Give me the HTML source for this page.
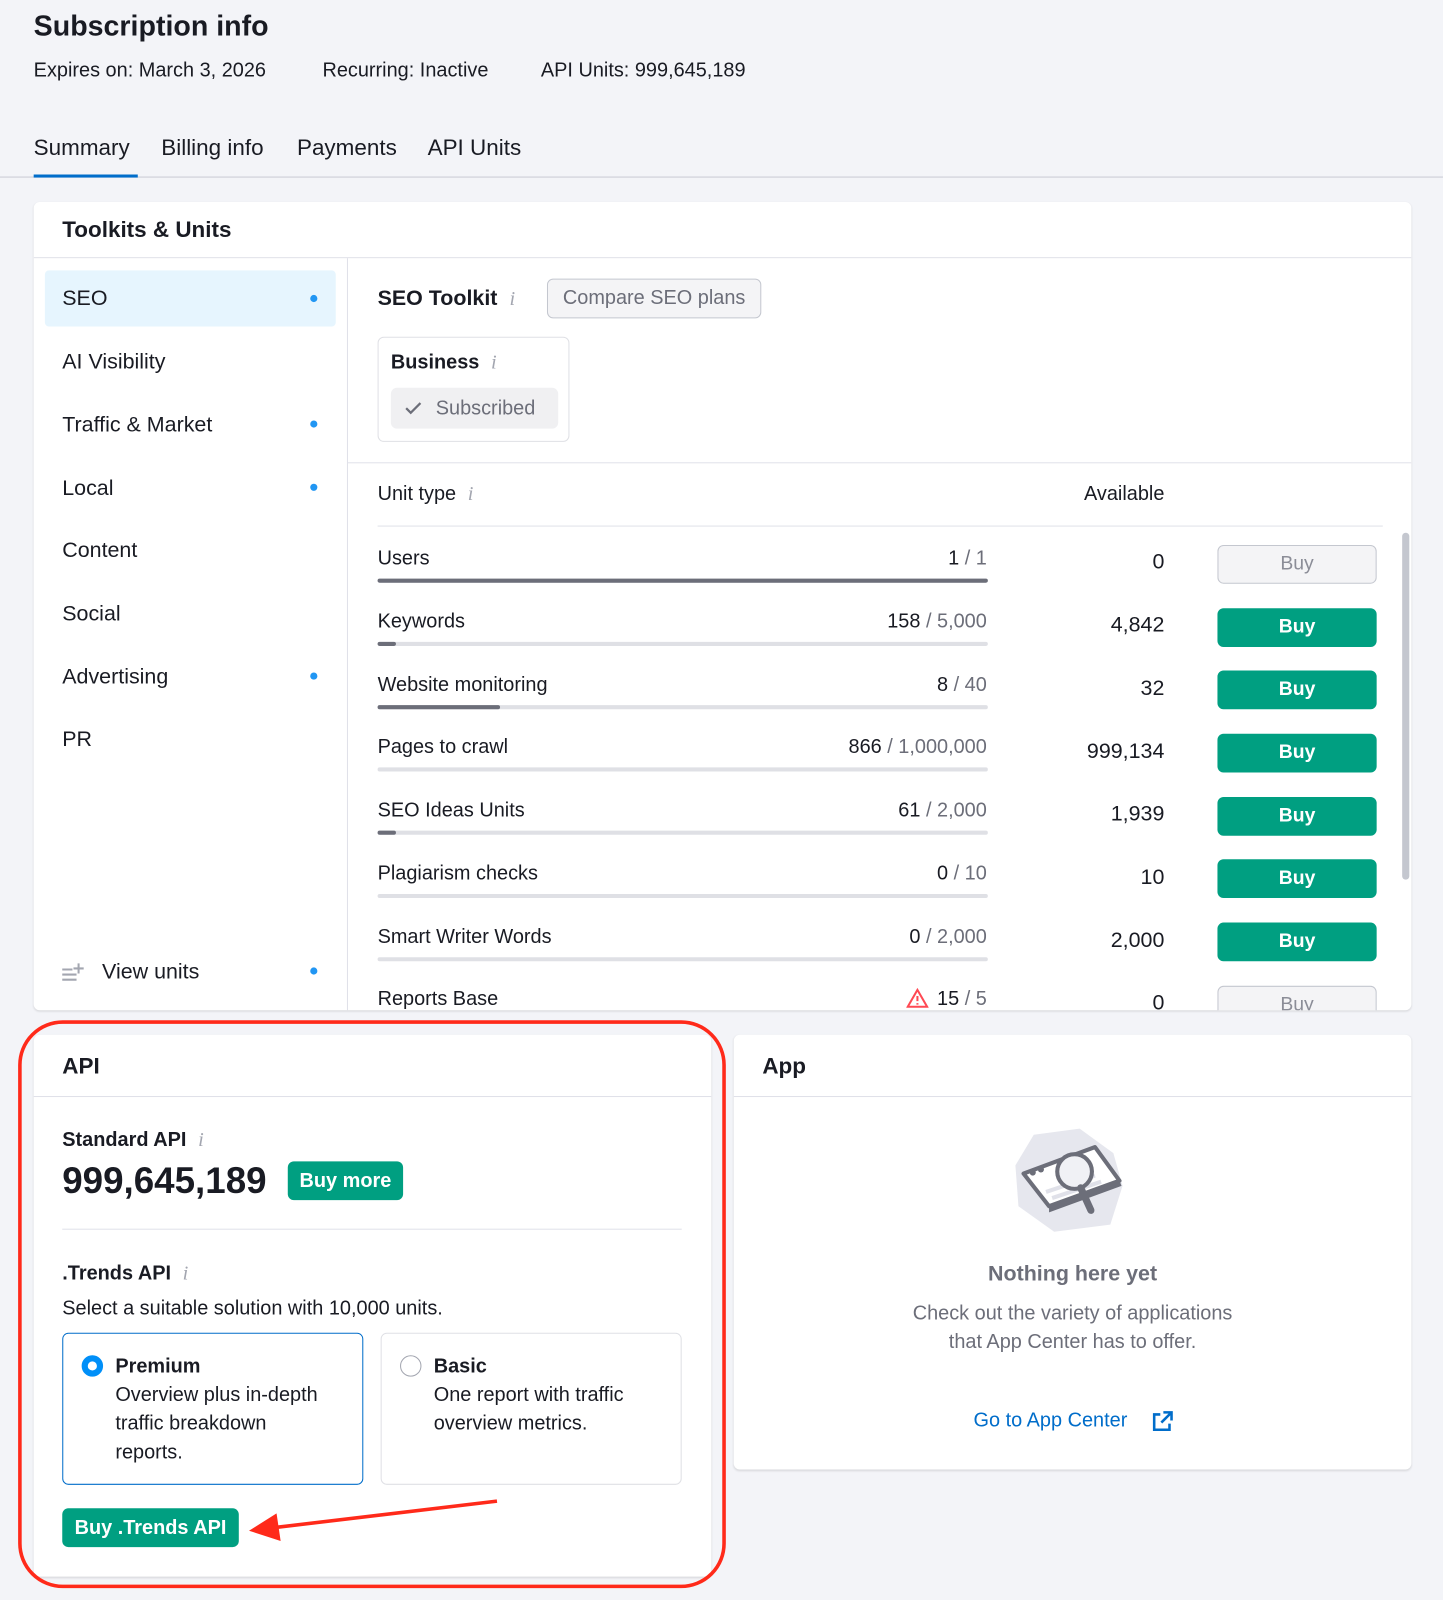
<!DOCTYPE html>
<html><head><meta charset="utf-8"><style>
*{box-sizing:border-box;margin:0;padding:0}
html,body{width:1443px;height:1600px;overflow:hidden;background:#f3f4f8}
body{font-family:"Liberation Sans",sans-serif;color:#191b23}
#w{position:absolute;left:0;top:0;width:1414px;height:1568px;transform:scale(1.0205);transform-origin:0 0}
.a{position:absolute;white-space:nowrap}
.card{position:absolute;background:#fff;border-radius:6px;box-shadow:0 1px 2px rgba(0,0,0,.12)}
.nav{position:absolute;left:61px;font-size:21px;color:#191b23}
.dot{position:absolute;left:304px;width:7px;height:7px;border-radius:50%;background:#2196f3}
.lbl{position:absolute;left:370px;font-size:19.5px}
.frac{position:absolute;right:447px;font-size:19.5px}
.frac span{color:#6c6e79}
.bar{position:absolute;left:370px;width:598px;height:4px;border-radius:2px;background:#dfe0e5}
.bar i{display:block;height:4px;border-radius:2px;background:#6c6e79}
.av{position:absolute;right:273px;font-size:21px}
.buy{position:absolute;left:1193px;width:156px;height:38px;border-radius:6px;background:#009f81;color:#fff;font-size:19px;font-weight:bold;text-align:center;line-height:38px}
.buy.d{background:#f4f4f6;border:1px solid #c4c7cf;color:#8b8d97;font-weight:normal;line-height:36px}
.ii{color:#a3a6b0;font-family:"Liberation Serif",serif;font-style:italic;font-size:20px}
</style></head><body><div id="w">
<div class="a" style="left:33px;top:10px;font-size:28px;font-weight:bold">Subscription info</div>
<div class="a" style="left:33px;top:58px;font-size:19.5px">Expires on: March 3, 2026</div>
<div class="a" style="left:316px;top:58px;font-size:19.5px">Recurring: Inactive</div>
<div class="a" style="left:530px;top:58px;font-size:19.5px">API Units: 999,645,189</div>
<div class="a" style="left:33px;top:132px;font-size:22px">Summary</div>
<div class="a" style="left:158px;top:132px;font-size:22px">Billing info</div>
<div class="a" style="left:291px;top:132px;font-size:22px">Payments</div>
<div class="a" style="left:419px;top:132px;font-size:22px">API Units</div>
<div class="a" style="left:0;top:173px;width:1414px;height:1px;background:#c9cbd3"></div>
<div class="a" style="left:33px;top:171px;width:102px;height:3px;background:#006dca"></div>

<div class="card" style="left:33px;top:198px;width:1350px;height:792px;overflow:hidden">
 <div class="a" style="left:28px;top:14px;font-size:22px;font-weight:bold">Toolkits &amp; Units</div>
 <div class="a" style="left:0;top:54px;width:1350px;height:1px;background:#e0e1e9"></div>
 <div class="a" style="left:307px;top:55px;width:1px;height:740px;background:#e0e1e9"></div>
 <div class="a" style="left:308px;top:255px;width:1042px;height:1px;background:#e0e1e9"></div>
</div>
<div class="a" style="left:44px;top:265px;width:285px;height:55px;background:#e6f5fe;border-radius:4px"></div>
<div class="nav" style="top:281px">SEO</div><div class="dot" style="top:289px"></div>
<div class="nav" style="top:343px">AI Visibility</div>
<div class="nav" style="top:405px">Traffic &amp; Market</div><div class="dot" style="top:412px"></div>
<div class="nav" style="top:467px">Local</div><div class="dot" style="top:474px"></div>
<div class="nav" style="top:528px">Content</div>
<div class="nav" style="top:590px">Social</div>
<div class="nav" style="top:652px">Advertising</div><div class="dot" style="top:659px"></div>
<div class="nav" style="top:713px">PR</div>
<svg class="a" style="left:60px;top:942px" width="24" height="20" viewBox="0 0 24 20" fill="none" stroke="#a3a6b0" stroke-width="2"><path d="M1 8h10M1 13h14M1 18h14M17 2v10M12 7h10"/></svg>
<div class="nav" style="left:100px;top:941px">View units</div><div class="dot" style="top:948px"></div>

<div class="a" style="left:370px;top:281px;font-size:21px;font-weight:bold">SEO Toolkit <span class="ii" style="font-weight:normal;margin-left:6px">i</span></div>
<div class="a" style="left:536px;top:273px;width:210px;height:39px;border:1px solid #c4c7cf;border-radius:6px;background:#f4f4f6;color:#6c6e79;font-size:19.5px;text-align:center;line-height:37px">Compare SEO plans</div>
<div class="a" style="left:370px;top:330px;width:188px;height:103px;border:1px solid #dfe0e5;border-radius:6px"></div>
<div class="a" style="left:383px;top:344px;font-size:19.5px;font-weight:bold">Business <span class="ii" style="font-weight:normal;margin-left:6px">i</span></div>
<div class="a" style="left:383px;top:380px;width:164px;height:40px;border-radius:6px;background:#f0f0f2;color:#6c6e79;font-size:19.5px;line-height:40px;padding-left:44px">Subscribed</div>
<svg class="a" style="left:397px;top:393px" width="16" height="14" viewBox="0 0 16 14"><path d="M1 7l4.5 4.5L15 2" fill="none" stroke="#6c6e79" stroke-width="2.2"/></svg>

<div class="a" style="left:370px;top:473px;font-size:19.5px">Unit type <span class="ii" style="margin-left:6px">i</span></div>
<div class="a" style="right:273px;top:473px;font-size:19.5px">Available</div>
<div class="a" style="left:370px;top:515px;width:985px;height:1px;background:#e0e1e9"></div>
<div class="a" style="left:1374px;top:522px;width:7px;height:340px;border-radius:4px;background:#c4c7cf"></div>

<div class="lbl" style="top:536px">Users</div><div class="frac" style="top:536px">1 <span>/ 1</span></div><div class="bar" style="top:567px"><i style="width:100%"></i></div><div class="av" style="top:539px">0</div><div class="buy d" style="top:534px">Buy</div>
<div class="lbl" style="top:598px">Keywords</div><div class="frac" style="top:598px">158 <span>/ 5,000</span></div><div class="bar" style="top:629px"><i style="width:3%"></i></div><div class="av" style="top:601px">4,842</div><div class="buy" style="top:596px">Buy</div>
<div class="lbl" style="top:660px">Website monitoring</div><div class="frac" style="top:660px">8 <span>/ 40</span></div><div class="bar" style="top:691px"><i style="width:20%"></i></div><div class="av" style="top:663px">32</div><div class="buy" style="top:657px">Buy</div>
<div class="lbl" style="top:721px">Pages to crawl</div><div class="frac" style="top:721px">866 <span>/ 1,000,000</span></div><div class="bar" style="top:752px"><i style="width:0"></i></div><div class="av" style="top:725px">999,134</div><div class="buy" style="top:719px">Buy</div>
<div class="lbl" style="top:783px">SEO Ideas Units</div><div class="frac" style="top:783px">61 <span>/ 2,000</span></div><div class="bar" style="top:814px"><i style="width:3%"></i></div><div class="av" style="top:786px">1,939</div><div class="buy" style="top:781px">Buy</div>
<div class="lbl" style="top:845px">Plagiarism checks</div><div class="frac" style="top:845px">0 <span>/ 10</span></div><div class="bar" style="top:876px"><i style="width:0"></i></div><div class="av" style="top:848px">10</div><div class="buy" style="top:842px">Buy</div>
<div class="lbl" style="top:907px">Smart Writer Words</div><div class="frac" style="top:907px">0 <span>/ 2,000</span></div><div class="bar" style="top:938px"><i style="width:0"></i></div><div class="av" style="top:910px">2,000</div><div class="buy" style="top:904px">Buy</div>
<div class="a" style="left:341px;top:960px;width:1042px;height:30px;overflow:hidden">
 <div class="a" style="left:29px;top:8px;font-size:19.5px">Reports Base</div>
 <svg class="a" style="left:547px;top:8px" width="22" height="20" viewBox="0 0 22 20"><path d="M11 2L1.5 18.5h19z" fill="none" stroke="#ff4953" stroke-width="2"/><path d="M11 8v5M11 15v1.5" stroke="#ff4953" stroke-width="2"/></svg>
 <div class="a" style="right:416px;top:8px;font-size:19.5px">15 <span style="color:#6c6e79">/ 5</span></div>
 <div class="a" style="right:242px;top:11px;font-size:21px">0</div>
 <div class="buy d" style="left:852px;top:6px">Buy</div>
</div>

<div class="card" style="left:33px;top:1014px;width:664px;height:531px">
 <div class="a" style="left:28px;top:18px;font-size:22px;font-weight:bold">API</div>
 <div class="a" style="left:0;top:60px;width:664px;height:1px;background:#e0e1e9"></div>
 <div class="a" style="left:28px;top:92px;font-size:19.5px;font-weight:bold">Standard API <span class="ii" style="font-weight:normal;margin-left:6px">i</span></div>
 <div class="a" style="left:28px;top:122px;font-size:36px;font-weight:bold">999,645,189</div>
 <div class="a" style="left:249px;top:124px;width:113px;height:38px;border-radius:6px;background:#009f81;color:#fff;font-size:19.5px;font-weight:bold;text-align:center;line-height:38px">Buy more</div>
 <div class="a" style="left:28px;top:190px;width:607px;height:1px;background:#e0e1e9"></div>
 <div class="a" style="left:28px;top:223px;font-size:19.5px;font-weight:bold">.Trends API <span class="ii" style="font-weight:normal;margin-left:6px">i</span></div>
 <div class="a" style="left:28px;top:257px;font-size:19.5px">Select a suitable solution with 10,000 units.</div>
 <div class="a" style="left:28px;top:292px;width:295px;height:149px;border:1.5px solid #006dca;border-radius:6px"></div>
 <div class="a" style="left:47px;top:314px;width:21px;height:21px;border-radius:50%;border:6px solid #008ff8;background:#fff"></div>
 <div class="a" style="left:80px;top:311px;font-size:19.5px;line-height:28px;white-space:normal;width:215px"><b>Premium</b><br>Overview plus in-depth traffic breakdown reports.</div>
 <div class="a" style="left:340px;top:292px;width:295px;height:149px;border:1px solid #dfe0e5;border-radius:6px"></div>
 <div class="a" style="left:359px;top:314px;width:21px;height:21px;border-radius:50%;border:1px solid #a3a6b0;background:#fff"></div>
 <div class="a" style="left:392px;top:311px;font-size:19.5px;line-height:28px;white-space:normal;width:220px"><b>Basic</b><br>One report with traffic overview metrics.</div>
 <div class="a" style="left:28px;top:464px;width:173px;height:38px;border-radius:6px;background:#009f81;color:#fff;font-size:19.5px;font-weight:bold;text-align:center;line-height:38px">Buy .Trends API</div>
</div>
<svg class="a" style="left:0;top:990px" width="720" height="578" viewBox="0 0 720 578"><rect x="19.5" y="11.5" width="690" height="553" rx="42" fill="none" stroke="#ff2a1a" stroke-width="3.5"/><path d="M487 481L268 507" stroke="#ff2a1a" stroke-width="3.5"/><path d="M244 510l27-17 4 27z" fill="#ff2a1a"/></svg>

<div class="card" style="left:719px;top:1014px;width:664px;height:426px">
 <div class="a" style="left:28px;top:18px;font-size:22px;font-weight:bold">App</div>
 <div class="a" style="left:0;top:60px;width:664px;height:1px;background:#e0e1e9"></div>
 <svg class="a" style="left:274px;top:88px" width="115" height="112" viewBox="0 0 115 112"><path d="M20 10L65 4L98 28L107 60L95 98L40 105L5 80L2 40Z" fill="#e6e7ee"/><path d="M10 48L80 22L104 55L35 80Z" fill="#fff" stroke="#6c6e79" stroke-width="4" stroke-linejoin="round"/><path d="M35 80L35 86L106 60L104 55" fill="#6c6e79"/><circle cx="19" cy="47" r="3" fill="#6c6e79"/><circle cx="27" cy="44" r="3" fill="#6c6e79"/><path d="M32 66L80 50M38 72L86 56" stroke="#e0e1e9" stroke-width="4"/><circle cx="60" cy="46" r="17" fill="#f0f1f5" stroke="#6c6e79" stroke-width="4"/><path d="M66 62L76 84" stroke="#6c6e79" stroke-width="7" stroke-linecap="round"/></svg>
 <div class="a" style="left:0;width:664px;text-align:center;top:223px;font-size:21px;font-weight:bold;color:#6c6e79">Nothing here yet</div>
 <div class="a" style="left:0;width:664px;text-align:center;top:259px;font-size:19.5px;line-height:28px;color:#6c6e79">Check out the variety of applications<br>that App Center has to offer.</div>
 <div class="a" style="left:235px;top:367px;font-size:19.5px;color:#006dca">Go to App Center</div>
 <svg class="a" style="left:409px;top:368px" width="22" height="22" viewBox="0 0 22 22" fill="none" stroke="#006dca" stroke-width="2.5"><path d="M9 4H3v15h15v-6M12 2h8v8M20 2L10 12"/></svg>
</div>
</div></body></html>
